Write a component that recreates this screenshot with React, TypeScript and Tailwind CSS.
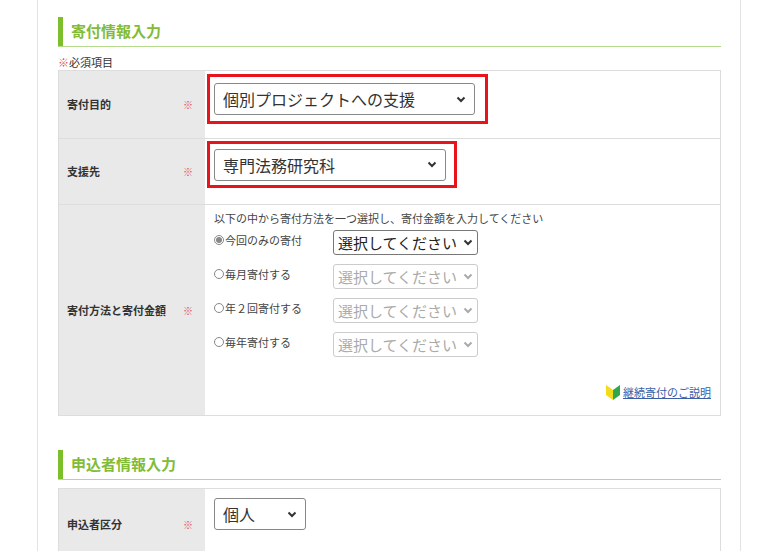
const F = { fontFamily: '"Noto Sans CJK JP", "Noto Sans", sans-serif' };

const Chevron = ({ c = "#333" }: { c?: string }) => (
  <svg width="10" height="7" viewBox="0 0 10 7" className="shrink-0">
    <path d="M1.5 1.5 5 5l3.5-3.5" fill="none" stroke={c} strokeWidth="2" />
  </svg>
);

const Heading = ({ t }: { t: string }) => (
  <div className="flex items-stretch border-b border-[#b5d98a] h-[30px]">
    <div className="w-[5px] bg-[#7dbf2a]" />
    <div className="pl-2 text-[15px] font-bold text-[#82bc36] leading-[28px]">{t}</div>
  </div>
);

const Label = ({ t, h }: { t: string; h: string }) => (
  <div className={`w-[146px] shrink-0 bg-[#e9e9e9] flex items-center justify-between pl-2 pr-3 text-[11px] font-bold text-[#333] ${h}`}>
    <span>{t}</span>
    <span className="text-[#e05060] text-[10px]">※</span>
  </div>
);

const Sel = ({ t, w, dim }: { t: string; w: string; dim?: boolean }) => (
  <div className={`flex items-center justify-between rounded-[3px] border bg-white px-1 h-[25px] ${w} ${dim ? "border-[#ccc] text-[#aaa]" : "border-[#777] text-[#222]"}`}>
    <span className="text-[15px] leading-none whitespace-nowrap">{t}</span>
    <Chevron c={dim ? "#aaa" : "#333"} />
  </div>
);

const Radio = ({ on }: { on?: boolean }) => (
  <span className="inline-flex w-[10px] h-[10px] rounded-full border border-[#888] items-center justify-center mr-[1px]">
    {on && <span className="w-[6px] h-[6px] rounded-full bg-[#888]" />}
  </span>
);

export default function App() {
  const plans = [
    ["今回のみの寄付", true],
    ["毎月寄付する", false],
    ["年２回寄付する", false],
    ["毎年寄付する", false],
  ] as const;
  return (
    <div className="w-[772px] h-[551px] overflow-hidden bg-white" style={F}>
      <div className="ml-[37px] w-[704px] h-full border-l border-r border-[#e3e3e3] pl-[20px] pr-[19px] pt-[17px]">
        <Heading t="寄付情報入力" />
        <div className="text-[11px] text-[#333] mt-[8px] leading-[15px]">
          <span className="text-[#e05060]">※</span>必須項目
        </div>
        <div className="border border-[#ddd] text-[#333]">
          <div className="flex border-b border-[#ddd]">
            <Label t="寄付目的" h="h-[67px]" />
            <div className="pl-[2px] pt-[3px]">
              <div className="border-[3px] border-[#e8141c] w-[281px] h-[50px] flex items-center pl-[4px]">
                <div className="flex items-center justify-between w-[261px] h-[32px] rounded-[3px] border border-[#888] px-2">
                  <span className="text-[16px]">個別プロジェクトへの支援</span>
                  <Chevron />
                </div>
              </div>
            </div>
          </div>
          <div className="flex border-b border-[#ddd]">
            <Label t="支援先" h="h-[65px]" />
            <div className="pl-[2px] pt-[2px]">
              <div className="border-[3px] border-[#e8141c] w-[250px] h-[47px] flex items-center pl-[4px]">
                <div className="flex items-center justify-between w-[232px] h-[32px] rounded-[3px] border border-[#888] px-2">
                  <span className="text-[16px]">専門法務研究科</span>
                  <Chevron />
                </div>
              </div>
            </div>
          </div>
          <div className="flex">
            <Label t="寄付方法と寄付金額" h="h-[210px]" />
            <div className="flex-1 pl-[9px] pr-[9px] pt-[6px] text-[11px] text-[#444] flex flex-col">
              <div className="leading-[15px]">以下の中から寄付方法を一つ選択し、寄付金額を入力してください</div>
              <div className="flex flex-col gap-[9px] mt-[4px]">
                {plans.map(([t, on]) => (
                  <div key={t} className="flex items-start">
                    <span className="w-[119px] flex items-center leading-[20px]"><Radio on={on} />{t}</span>
                    <Sel t="選択してください" w="w-[145px]" dim={!on} />
                  </div>
                ))}
              </div>
              <div className="mt-auto mb-[14px] flex justify-end items-center gap-[2px]">
                <svg width="16" height="18" viewBox="0 0 16 18">
                  <path d="M1 2 8 7v10L1 12z" fill="#f2dc1a" />
                  <path d="M15 2 8 7v10l7-5z" fill="#2ea84a" />
                </svg>
                <span className="text-[#3a5fa8] underline text-[11px]">継続寄付のご説明</span>
              </div>
            </div>
          </div>
        </div>
        <div className="mt-[34px]">
          <Heading t="申込者情報入力" />
        </div>
        <div className="mt-[8px] border border-[#ddd] flex">
          <Label t="申込者区分" h="h-[70px]" />
          <div className="pl-[9px] pt-[9px]">
            <div className="flex items-center justify-between w-[92px] h-[32px] rounded-[3px] border border-[#888] px-2">
              <span className="text-[16px] text-[#333]">個人</span>
              <Chevron />
            </div>
          </div>
        </div>
      </div>
    </div>
  );
}
